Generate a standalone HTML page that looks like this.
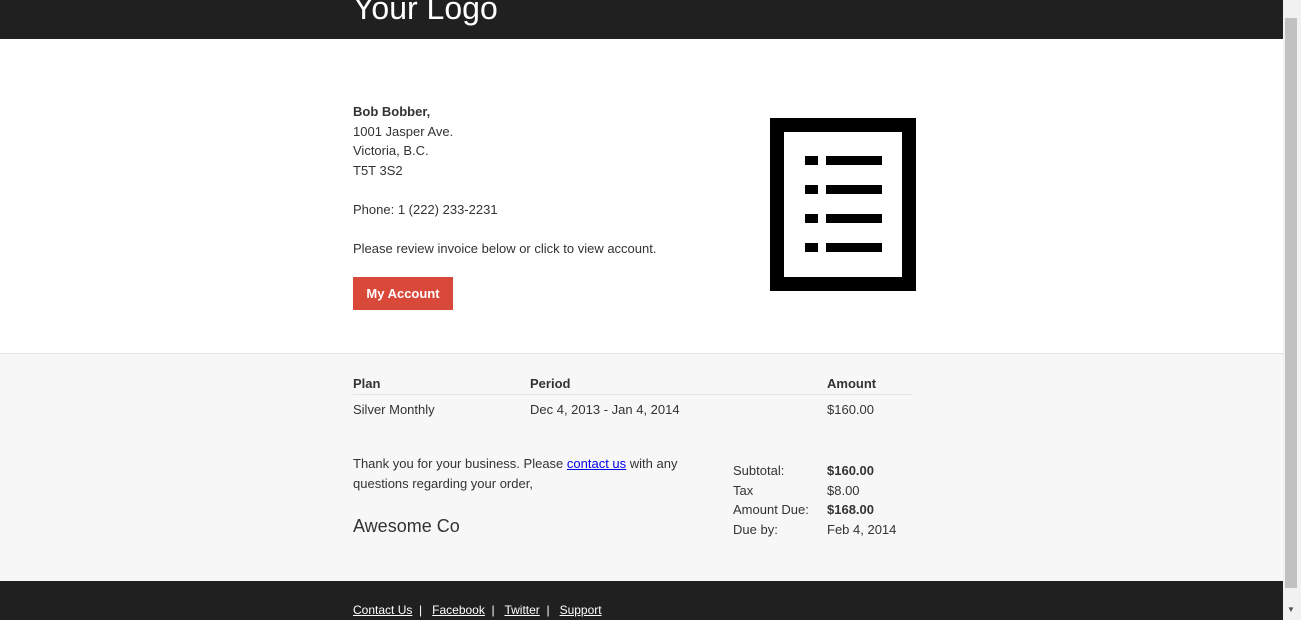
<!DOCTYPE html>
<html><head><style>
*{margin:0;padding:0;box-sizing:border-box}
body{width:1301px;height:620px;overflow:hidden;position:relative;font-family:"Liberation Sans",sans-serif;font-size:13px;color:#333;background:#fff}
.a{position:absolute;white-space:nowrap}
b{font-weight:bold}
</style></head><body>
<div class="a" style="left:0;top:0;width:1283px;height:39px;background:#202020"></div>
<div class="a" style="left:353px;top:-12px;font-size:32px;color:#fff;line-height:40px">Your Logo</div>
<div class="a" style="left:353px;top:102px;line-height:19.5px">
<b>Bob Bobber,</b><br>1001 Jasper Ave.<br>Victoria, B.C.<br>T5T 3S2<br><br>Phone: 1 (222) 233-2231<br><br>Please review invoice below or click to view account.</div>
<div class="a" style="left:353px;top:277px;width:100px;height:33px;background:#d9493a;color:#fff;font-weight:bold;text-align:center;line-height:33px">My Account</div>
<svg class="a" style="left:770px;top:118px" width="146" height="173">
<rect x="7" y="7" width="132" height="159" fill="#fff" stroke="#000" stroke-width="14"/>
<g fill="#000"><rect x="35" y="38" width="13" height="9"/><rect x="56" y="38" width="56" height="9"/>
<rect x="35" y="67" width="13" height="9"/><rect x="56" y="67" width="56" height="9"/>
<rect x="35" y="96" width="13" height="9"/><rect x="56" y="96" width="56" height="9"/>
<rect x="35" y="125" width="13" height="9"/><rect x="56" y="125" width="56" height="9"/></g></svg>
<div class="a" style="left:0;top:353px;width:1283px;height:228px;background:#f7f7f7;border-top:1px solid #e4e4e4"></div>
<div class="a" style="left:353px;top:376px"><b>Plan</b></div>
<div class="a" style="left:530px;top:376px"><b>Period</b></div>
<div class="a" style="left:827px;top:376px"><b>Amount</b></div>
<div class="a" style="left:353px;top:394px;width:559px;height:1px;background:#e4e4e4"></div>
<div class="a" style="left:353px;top:402px">Silver Monthly</div>
<div class="a" style="left:530px;top:402px">Dec 4, 2013 - Jan 4, 2014</div>
<div class="a" style="left:827px;top:402px">$160.00</div>
<div class="a" style="left:353px;top:454px;line-height:20px">Thank you for your business. Please <a href="#" style="color:#00e">contact us</a> with any<br>questions regarding your order,</div>
<div class="a" style="left:353px;top:516px;font-size:18px">Awesome Co</div>
<div class="a" style="left:733px;top:461px;line-height:19.5px">Subtotal:<br>Tax<br>Amount Due:<br>Due by:</div>
<div class="a" style="left:827px;top:461px;line-height:19.5px"><b>$160.00</b><br>$8.00<br><b>$168.00</b><br>Feb 4, 2014</div>
<div class="a" style="left:0;top:581px;width:1283px;height:39px;background:#202020"></div>
<div class="a" style="left:353px;top:603px;font-size:12px;color:#fff"><u>Contact Us</u>&nbsp; |&nbsp;&nbsp; <u>Facebook</u>&nbsp; |&nbsp;&nbsp; <u>Twitter</u>&nbsp; |&nbsp;&nbsp; <u>Support</u></div>
<div class="a" style="left:1283px;top:0;width:18px;height:620px;background:#f1f1f1"></div>
<div class="a" style="left:1285px;top:18px;width:12px;height:570px;background:#c1c1c1"></div>
<div class="a" style="left:1287px;top:605px;font-size:8px;color:#505050">▼</div>
</body></html>
